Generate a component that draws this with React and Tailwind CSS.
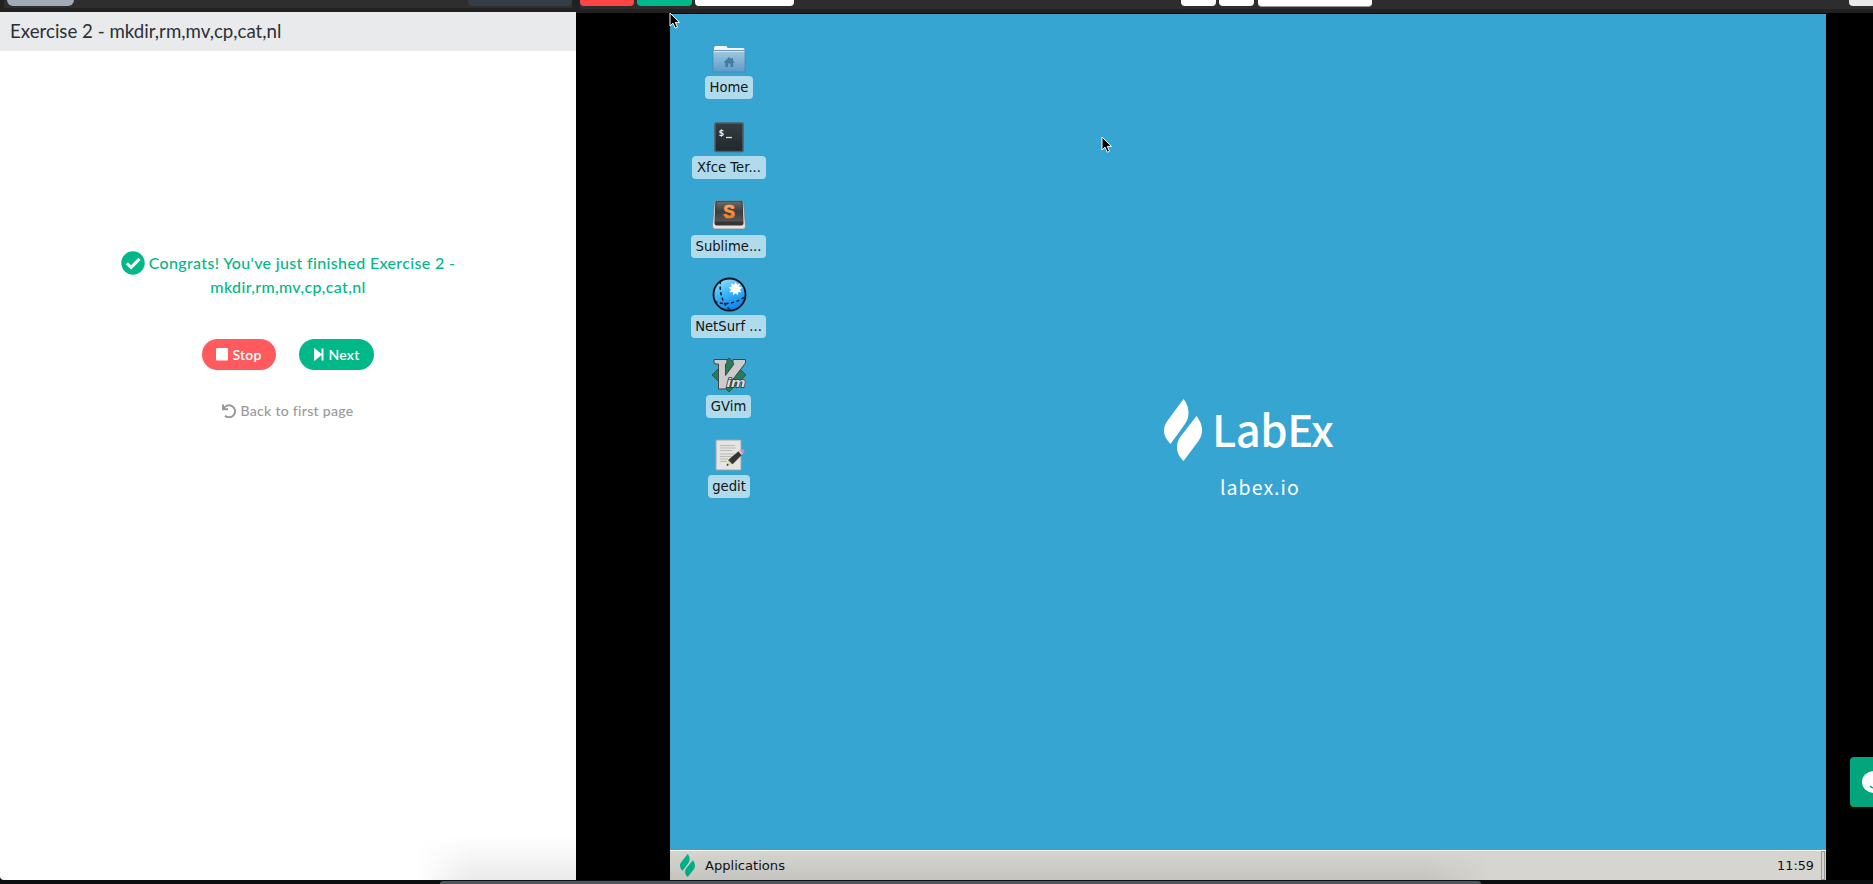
import React from "react";

function Leaf({ className }) {
  return (
    <svg className={className} viewBox="0 0 38 62" preserveAspectRatio="none" fill="currentColor">
      <path d="M19.500 0L4 21C1 25 0 28 0 31.500c0 6 3 9.500 6.500 13.500L21 25q3.500-5 3.500-11.500C24.500 8 22 3 19.500 0Z" />
      <path d="M32.500 17L17 37c-3 4-4 7-4 11.500 0 6 3 10 6.500 13.500L34.500 42q3.500-5 3.500-11C38 25 35 20.500 32.500 17Z" />
    </svg>
  );
}

function Cursor({ className }) {
  return (
    <svg className={className} width="12" height="18" viewBox="0 0 12 18">
      <path d="M1 1v13l3-2.800 2.200 5 2.300-1-2.200-4.800H10.500Z" fill="#000" stroke="#fff" strokeWidth="1" />
    </svg>
  );
}

function FolderIcon() {
  return (
    <svg width="34" height="28" viewBox="0 0 34 28">
      <defs>
        <linearGradient id="folder" x1="0" y1="0" x2="0" y2="1">
          <stop offset="0" stopColor="#a3c9de" />
          <stop offset="1" stopColor="#5c9bc9" />
        </linearGradient>
      </defs>
      <path d="M2 8V3q0-2 2-2h10q1 0 1.500 2H31q1.500 0 1.500 1.500V8Z" fill="#f4f4f2" />
      <path d="M1 5.500h32V26q0 1-1 1H2q-1 0-1-1Z" fill="url(#folder)" stroke="#4d86ae" strokeWidth=".8" />
      <path d="M1.500 6.500h31" stroke="#d3e5ef" />
      <path d="M17 12l-5.500 5.500h1.800V22H16v-3.500h2.500V22h2.700v-4.500h1.800L21 15.500V13h-1.500v1.300Z" fill="#427ba3" />
    </svg>
  );
}

function TerminalIcon() {
  return (
    <svg width="30" height="31" viewBox="0 0 30 31">
      <defs>
        <linearGradient id="term" x1="0" y1="0" x2="0" y2="1">
          <stop offset="0" stopColor="#343d40" />
          <stop offset="1" stopColor="#20282b" />
        </linearGradient>
      </defs>
      <rect x="1" y="1" width="28" height="28.500" rx="1" fill="url(#term)" stroke="#555c60" strokeWidth="1.600" />
      <text x="4.500" y="13.500" fontSize="9.500" fontWeight="bold" fill="#eee" fontFamily="DejaVu Sans Mono">$</text>
      <path d="M12 15.500h6" stroke="#ddd" strokeWidth="1.300" />
    </svg>
  );
}

function SublimeIcon() {
  return (
    <svg width="34" height="30" viewBox="0 0 34 30">
      <defs>
        <linearGradient id="subl" x1="0" y1="0" x2="0" y2="1">
          <stop offset="0" stopColor="#6a6a6a" />
          <stop offset=".5" stopColor="#3f3f3f" />
          <stop offset="1" stopColor="#555" />
        </linearGradient>
        <linearGradient id="sublS" x1="0" y1="0" x2="0" y2="1">
          <stop offset="0" stopColor="#ffb46a" />
          <stop offset="1" stopColor="#f07012" />
        </linearGradient>
      </defs>
      <path d="M4 1h26q1.500 0 1.500 1.500L33.500 26q0 3-2.500 3H3Q.5 29 .5 26L2.500 2.500Q2.500 1 4 1Z" fill="#e6e2e2" stroke="#777" strokeWidth=".6" />
      <path d="M4.500 1h25q1 0 1.200 1.500L31.500 23q0 2.500-2.500 2.500H5Q2.500 25.500 2.500 23L3.300 2.500Q3.500 1 4.500 1Z" fill="#343434" />
      <path d="M5.500 1.500h23q1 0 1 1L31 21.500H3L4.500 2.500q0-1 1-1Z" fill="url(#subl)" />
      <text x="17" y="18" fontSize="17.500" fontWeight="bold" textAnchor="middle" fill="url(#sublS)" stroke="url(#sublS)" strokeWidth=".7" fontFamily="Liberation Sans">S</text>
    </svg>
  );
}

function NetSurfIcon() {
  return (
    <svg width="35" height="35" viewBox="0 0 35 35">
      <defs>
        <linearGradient id="globe" x1="0" y1="0" x2=".4" y2="1">
          <stop offset="0" stopColor="#a5e6ff" />
          <stop offset=".5" stopColor="#41b8fb" />
          <stop offset="1" stopColor="#0d8af0" />
        </linearGradient>
      </defs>
      <circle cx="17.500" cy="17.500" r="16" fill="url(#globe)" stroke="#06131c" strokeWidth="1.800" />
      <path d="M8.500 4C7 14 10 27 18.500 33M2.500 24C12 29 24 26 32.500 20" fill="none" stroke="#061f30" strokeWidth="1.500" strokeDasharray="3.200 2.400" />
      <path d="m23.500 5 1.500 2.800 3-1.300-.7 3.200 3.200.8-2.500 2 1.500 2.800-3.200-.2-.3 3.200-2.500-2-2.500 2-.3-3.200-3.200.2 1.500-2.800-2.500-2 3.200-.8-.7-3.200 3 1.300Z" fill="#fff" />
    </svg>
  );
}

function VimIcon() {
  return (
    <svg width="36" height="36" viewBox="0 0 36 36">
      <path d="m18 1 17 17-17 17L1 18Z" fill="#2c7a5c" stroke="#174c3b" strokeWidth=".7" />
      <path d="M3 2.500h13v3.500l-1.500 1V18.500L23 7l-1-1V2.500h12.500V6L14.500 32H7.500V7H5L3 6Z" fill="#ccc" stroke="#444" strokeWidth="1" />
      <text x="15.500" y="30" fontSize="13" fontWeight="bold" fontStyle="italic" fill="#e0e0e0" stroke="#333" strokeWidth="1.300" paintOrder="stroke" textLength="19" lengthAdjust="spacingAndGlyphs" fontFamily="Liberation Sans">im</text>
    </svg>
  );
}

function GeditIcon() {
  return (
    <svg width="32" height="32" viewBox="0 0 32 32">
      <path d="M3 1h25v30H3Z" fill="#e4e4e2" stroke="#a0a5a5" strokeWidth=".9" />
      <path d="M7 6.500h15M7 9h16M7 11.500h12M7 15h14M7 17.500h12M7 20h8M7 22.500h7" stroke="#b9b9b7" strokeWidth="1" />
      <path d="m14 26.500 1.500-5.500 4 4.500Z" fill="#e8d78c" />
      <path d="m15.500 21 10-8.500 3 3.500-9 9Z" fill="#333" stroke="#222" strokeWidth=".5" />
      <path d="m25.500 12.500 1.500-1.500 3 3.500-1.500 1.500Z" fill="#c8ccce" />
      <path d="m27 11 1-.8q2-.6 3 1t0 2.500l-1 .8Z" fill="#d985b8" />
      <path d="m13.500 27 .8-2.500 1.600 1.600Z" fill="#222" />
    </svg>
  );
}

const shortcuts = [
  { label: "Home", icon: <FolderIcon />, width: "w-12", gap: "gap-[3px]" },
  { label: "Xfce Ter...", icon: <TerminalIcon />, width: "w-[74px]", gap: "gap-[3px]" },
  { label: "Sublime...", icon: <SublimeIcon />, width: "w-[75px] mr-px", gap: "gap-[5px]" },
  { label: "NetSurf ...", icon: <NetSurfIcon />, width: "w-[75px] mr-px", gap: "gap-[3px]" },
  { label: "GVim", icon: <VimIcon />, width: "w-[45px] mr-px", gap: "gap-[2px]" },
  { label: "gedit", icon: <GeditIcon />, width: "w-[42px]", gap: "gap-[4px]" },
];

function TopBar() {
  return (
    <header className="flex h-[13px] shrink-0 bg-[#212121]">
      <div className="ml-1 flex h-2 w-[568px] items-start justify-between bg-[#2e2e2e]">
        <div className="ml-[3px] h-1.5 w-[67px] rounded-b-xl bg-[#a0acb3]" />
        <div className="h-1.5 w-[104px] rounded-b bg-[#343c46]" />
      </div>
      <div className="ml-2 flex h-[9px] flex-1 items-start bg-[#2d2d2d]">
        <div className="h-1.5 w-[54px] rounded-b bg-[#fe4444]" />
        <div className="ml-[3px] h-1.5 w-[55px] rounded-b bg-[#00b888]" />
        <div className="ml-[3px] h-1.5 w-[99px] rounded-b bg-white" />
        <div className="ml-[387px] h-1.5 w-[35px] rounded-b bg-white" />
        <div className="ml-[3px] h-1.5 w-[35px] rounded-b bg-white" />
        <div className="ml-1 h-[7px] w-[114px] rounded-b border-b border-[#999] bg-white" />
        <div className="ml-auto h-1.5 w-6 rounded-bl bg-[#e8e9ea]" />
      </div>
    </header>
  );
}

function LessonPanel() {
  return (
    <aside className="relative -mt-px flex w-[576px] shrink-0 flex-col overflow-hidden rounded-bl bg-white font-['Lato',sans-serif]">
      <h1 className="flex h-[39px] shrink-0 items-center bg-[#e9eaec] pb-px pl-[10px] text-[18.7px] text-[#2b3036]">
        Exercise 2 - mkdir,rm,mv,cp,cat,nl
      </h1>
      <div className="flex flex-col items-center pt-[200px]">
        <div className="text-center text-base/6 font-medium tracking-[0.340px] text-[#00b888]">
          <div className="flex h-6 items-center justify-center gap-1">
            <svg width="24" height="24" viewBox="0 0 24 24">
              <circle cx="12" cy="12" r="11.700" fill="#00b888" />
              <path d="m5.800 12.200 4.300 4.200 8.500-8.500" fill="none" stroke="#fff" strokeWidth="3" />
            </svg>
            <span>Congrats! You've just finished Exercise 2 -</span>
          </div>
          <div>mkdir,rm,mv,cp,cat,nl</div>
        </div>
        <div className="mt-10 flex gap-[23px] text-sm font-semibold tracking-[0.2px] text-white">
          <button className="flex h-[31px] w-[74px] items-center justify-center gap-1 rounded-full bg-[#ff5b5e]">
            <svg width="12" height="13" viewBox="0 0 12 13"><rect width="12" height="12.500" rx="1" fill="#fff" /></svg>
            Stop
          </button>
          <button className="flex h-[31px] w-[75px] items-center justify-center gap-[5px] rounded-full bg-[#00b888]">
            <svg width="10" height="13" viewBox="0 0 10 13" fill="#fff"><path d="M0 1q0-1 1-.5L7.500 6V.5H9.500v12h-2V7L1 12.500q-1 .5-1-.5Z" /></svg>
            Next
          </button>
        </div>
        <a className="mt-[31px] flex items-center gap-1 text-sm/5 font-medium tracking-[0.310px] text-[#999]">
          <svg width="14" height="14" viewBox="0 0 14 14" fill="none" stroke="currentColor" strokeWidth="2">
            <path d="M1 .5v4.800h5M1.500 5A6 6 0 1 1 3 11.700" />
          </svg>
          Back to first page
        </a>
      </div>
      <div className="mt-auto flex justify-end">
        <div className="h-11 w-[160px] bg-gradient-to-b from-transparent to-black/8 [mask-image:linear-gradient(to_right,transparent,black_35%)]" />
      </div>
    </aside>
  );
}

function Desktop() {
  return (
    <main className="relative ml-[94px] mt-px flex w-[1156px] shrink-0 flex-col bg-[#36a5d2] font-['DejaVu_Sans',sans-serif]">
      <Cursor className="absolute -left-px -top-[2px]" />
      <Cursor className="absolute left-[431px] top-[122px]" />
      <div className="flex flex-1">
        <div className="flex w-[118px] flex-col pt-[5px]">
          {shortcuts.map((s) => (
            <div key={s.label} className={`flex h-[79.800px] flex-col items-center justify-end ${s.gap}`}>
              {s.icon}
              <div className={`flex h-[23px] items-center justify-center whitespace-nowrap rounded bg-[#afdbec] pt-px text-[13.200px] text-[#101517] ${s.width}`}>
                {s.label}
              </div>
            </div>
          ))}
        </div>
        <div className="ml-[376px] mt-[384px] flex flex-col font-['Noto_Sans_CJK_SC','Noto_Sans',sans-serif] text-white">
          <div className="flex h-[64px] items-center">
            <Leaf className="h-[62px] w-[38px]" />
            <span className="ml-[10px] pb-[2px] text-[43.500px]/[64px] font-medium tracking-[-0.500px]">LabEx</span>
          </div>
          <div className="ml-[56px] mt-[11px] text-[19.500px]/[28px] tracking-[1.050px]">labex.io</div>
        </div>
      </div>
      <footer className="relative flex h-[30px] items-center border-t border-white bg-[#d6d5d0] text-[13.100px] text-[#111]">
        <div className="absolute bottom-0 left-0 h-[29px] w-[820px] bg-gradient-to-b from-transparent to-black/8 [mask-image:linear-gradient(to_left,transparent,black_8%)]" />
        <Leaf className="ml-[10px] h-[23px] w-[15px] text-[#00b58a]" />
        <span className="ml-[10px]">Applications</span>
        <span className="ml-auto text-[12.800px]">11:59</span>
        <div className="ml-[7px] mr-px h-full w-1 border border-[#96958f]" />
      </footer>
    </main>
  );
}

export default function App() {
  return (
    <div className="relative flex h-[884px] w-[1873px] flex-col overflow-hidden bg-black">
      <TopBar />
      <div className="flex h-[867px]">
        <LessonPanel />
        <Desktop />
      </div>
      <div className="flex h-1 bg-[#0c0e0f]">
        <div className="ml-[440px] mt-px h-[3px] w-[1041px] rounded-t bg-[#4e585c]" />
      </div>
      <div className="absolute right-0 top-[757px] flex h-[50px] w-[23px] items-center overflow-hidden rounded-l bg-[#02a57c]">
        <svg className="ml-3 shrink-0" width="24" height="22" viewBox="0 0 24 22">
          <ellipse cx="12" cy="11" rx="12" ry="11" fill="#fff" />
          <path d="M8 15q4 4 8 0" fill="none" stroke="#02a57c" strokeWidth="1.200" />
        </svg>
      </div>
    </div>
  );
}
